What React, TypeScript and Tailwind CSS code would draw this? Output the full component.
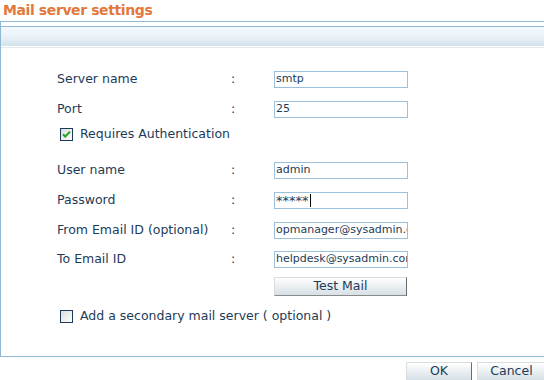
import React from 'react';

const font = { fontFamily: '"DejaVu Sans", Verdana, sans-serif' };

const Field: React.FC<{ label: string; value: string; cursor?: boolean; className?: string }> = ({ label, value, cursor, className }) => (
    <div className={`flex items-center h-[17px] ${className ?? ''}`}>
        <div className="w-[174px] pl-[56px] box-content text-[12.5px] text-[#1d3b58]">{label}</div>
        <div className="w-[43px] text-[12.5px] text-[#1d3b58]">:</div>
        <div className={`w-[134px] h-[17px] border border-[#9cc0dc] bg-white flex items-center pl-[1px] overflow-hidden whitespace-nowrap text-[#1d3b58] ${cursor ? 'text-[13px]' : 'text-[11px]'}`}>
            {value}
            {cursor && <span className="inline-block w-[1px] h-[13px] bg-black ml-[1px]" />}
        </div>
    </div>
);

const Checkbox: React.FC<{ checked?: boolean }> = ({ checked }) => (
    <svg width="13" height="13" viewBox="0 0 13 13" className="shrink-0">
        <defs>
            <linearGradient id={checked ? 'cbg1' : 'cbg2'} x1="0" y1="0" x2="1" y2="1">
                <stop offset="0" stopColor="#dcdcd6" />
                <stop offset="1" stopColor="#ffffff" />
            </linearGradient>
        </defs>
        <rect x="0.5" y="0.5" width="12" height="12" fill={`url(#${checked ? 'cbg1' : 'cbg2'})`} stroke="#1c3b59" />
        {checked && <path d="M3 6.2 L5.2 8.6 L10 3.6" fill="none" stroke="#21a121" strokeWidth="2" />}
    </svg>
);

const Button: React.FC<{ children: React.ReactNode; className?: string }> = ({ children, className }) => (
    <button
        className={`h-[19px] flex items-center justify-center text-[12.5px] text-[#1d3b58] border border-t-[#d8dde0] border-l-[#d8dde0] border-r-[#6b6b6b] border-b-[#8a8a8a] bg-gradient-to-b from-white to-[#d6e0e6] ${className ?? ''}`}
    >
        {children}
    </button>
);

const App: React.FC = () => {
    return (
        <div className="w-[544px] h-[380px] bg-white overflow-hidden" style={font}>
            <div className="h-[21px] pl-[3px] pt-[2px] text-[14px] font-bold tracking-[-0.4px] leading-[17px] text-[#e2783a]">Mail server settings</div>

            <div className="h-[336px] border-t border-l border-b border-[#8fb8d2] flex flex-col">
                <div className="h-[4px]" />
                <div className="h-[20px] border-t border-[#8fb8d2] bg-gradient-to-b from-[#f3f9fd] via-[#eaf2f8] to-[#d3e2ea]" />
                <div className="h-[1px] bg-white" />
                <div className="h-[1px] bg-[#e1eaef]" />

                <div className="flex flex-col">
                    <Field label="Server name" value="smtp" className="mt-[23px]" />
                    <Field label="Port" value="25" className="mt-[13px]" />
                    <div className="flex items-center h-[17px] mt-[8px] pl-[59px] gap-[7px] text-[12.5px] text-[#1d3b58]">
                        <Checkbox checked />
                        <span>Requires Authentication</span>
                    </div>
                    <Field label="User name" value="admin" className="mt-[19px]" />
                    <Field label="Password" value="*****" cursor className="mt-[13px]" />
                    <Field label="From Email ID (optional)" value="opmanager@sysadmin.com" className="mt-[13px]" />
                    <Field label="To Email ID" value="helpdesk@sysadmin.com" className="mt-[12px]" />
                    <div className="flex mt-[9px] pl-[273px]">
                        <Button className="w-[133px]">Test Mail</Button>
                    </div>
                    <div className="flex items-center h-[17px] mt-[12px] pl-[59px] gap-[7px] text-[12.5px] text-[#1d3b58]">
                        <Checkbox />
                        <span>Add a secondary mail server ( optional )</span>
                    </div>
                </div>
            </div>

            <div className="flex justify-end gap-[5px] mt-[5px] -mr-[2px]">
                <Button className="w-[66px]">OK</Button>
                <Button className="w-[69px]">Cancel</Button>
            </div>
        </div>
    );
};

export default App;
